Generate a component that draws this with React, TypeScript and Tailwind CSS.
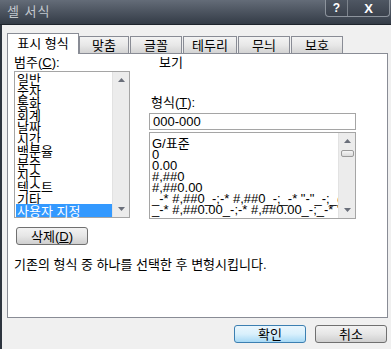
import React from 'react';

const font = { fontFamily: '"Liberation Sans", "Noto Sans CJK KR", sans-serif' };

const categories = [
  '일반',
  '숫자',
  '통화',
  '회계',
  '날짜',
  '시간',
  '백분율',
  '분수',
  '지수',
  '텍스트',
  '기타',
  '사용자 지정',
];

const formats = [
  'G/표준',
  '0',
  '0.00',
  '#,##0',
  '#,##0.00',
  '_-* #,##0_-;-* #,##0_-;_-* "-"_-;_@_-',
  '_-* #,##0.00_-;-* #,##0.00_-;_-* "-"??_-;_@_-',
];

const tabs = [
  { label: '맞춤', w: 'w-[50px]' },
  { label: '글꼴', w: 'w-[52px]' },
  { label: '테두리', w: 'w-[54px]' },
  { label: '무늬', w: 'w-[52px]' },
  { label: '보호', w: 'w-[52px]' },
];

const Arrow = ({ up }: { up?: boolean }) => (
  <svg width="7" height="4" viewBox="0 0 7 4">
    <path d={up ? 'M0 4 L3.5 0 L7 4 Z' : 'M0 0 L3.5 4 L7 0 Z'} fill="#6a6f7a" />
  </svg>
);

const ScrollBar = ({ thumb }: { thumb?: boolean }) => (
  <div className="w-[17px] h-full flex flex-col bg-[#ececec] border-l border-[#e2e2e2]">
    <div className="h-[16px] flex items-center justify-center">
      <Arrow up />
    </div>
    <div className="flex-1 flex flex-col items-center">
      {thumb && (
        <div className="mt-[1px] w-[13px] h-[7px] rounded-[2px] border border-[#9a9a9a] bg-gradient-to-b from-[#f6f6f6] to-[#dadada]" />
      )}
    </div>
    <div className="h-[16px] flex items-center justify-center">
      <Arrow />
    </div>
  </div>
);

const WinButton = ({
  children,
  primary,
  className = '',
}: {
  children: React.ReactNode;
  primary?: boolean;
  className?: string;
}) => (
  <div
    className={
      'h-[18px] rounded-[3px] border flex items-center justify-center text-[13px] leading-[13px] text-black ' +
      (primary
        ? 'border-[#3c7fb1] bg-gradient-to-b from-[#eaf6fd] via-[#d9f0fc] to-[#a7d9f5] '
        : 'border-[#707070] bg-gradient-to-b from-[#f2f2f2] via-[#e6e6e6] to-[#cfcfcf] ') +
      className
    }
  >
    {children}
  </div>
);

export default function App() {
  return (
    <div className="w-[391px] h-[349px] bg-[#f0f0f0] flex flex-col overflow-hidden text-black" style={font}>
      {/* title bar */}
      <div className="h-[25px] flex justify-between bg-gradient-to-b from-[#646c78] to-[#343c47] border-b border-[#1e242c]">
        <div className="pl-[7px] pt-[5px] text-[13px] leading-[14px] text-[#c3c8ce] tracking-[1px]">셀 서식</div>
        <div className="mr-[1px] h-[17px] flex border border-t-0 border-[#8d949d] rounded-b-[4px] bg-gradient-to-b from-[#4f5763] to-[#3b424d]">
          <div className="w-[22px] flex items-center justify-center text-white text-[12px] font-bold leading-none border-r border-[#7d848d]">
            ?
          </div>
          <div className="w-[41px] flex items-center justify-center text-white text-[13px] font-bold leading-none">
            X
          </div>
        </div>
      </div>

      <div className="flex-1 flex">
        <div className="w-[2px] bg-[#2e353f]" />
        <div className="flex-1 flex flex-col pl-[5px] pr-[3px] pt-[8px]">
          {/* tabs */}
          <div className="h-[20px] flex items-end">
            <div className="relative z-10 w-[72px] h-[21px] mb-[-1px] bg-white border border-b-0 border-[#898c95] flex justify-center pt-[3px] text-[13px] leading-[14px]">
              표시 형식
            </div>
            <div className="flex gap-[1px]">
              {tabs.map((t) => (
                <div
                  key={t.label}
                  className={
                    t.w +
                    ' h-[17px] border border-b-0 border-[#898c95] bg-gradient-to-b from-[#f3f3f3] via-[#e8e8e8] to-[#d3d3d3] flex justify-center pt-[2px] text-[13px] leading-[14px]'
                  }
                >
                  {t.label}
                </div>
              ))}
            </div>
          </div>

          {/* panel */}
          <div className="w-[381px] h-[265px] bg-white border border-[#898c95] flex flex-col pl-[6px]">
            <div className="flex pt-[2px]">
              {/* left column */}
              <div className="w-[116px] flex flex-col">
                <div className="text-[13px] leading-[13px]">
                  범주(<span className="underline">C</span>):
                </div>
                <div className="mt-[2px] h-[147px] border border-[#a5a5a5] flex">
                  <div className="flex-1 flex flex-col pl-[1px]">
                    {categories.map((c, i) => (
                      <div
                        key={c}
                        className={
                          'text-[13px] leading-[15px] pl-[1px] whitespace-nowrap ' +
                          (i === categories.length - 1 ? 'bg-[#3399ff] text-white h-[13px]' : 'h-[12px]')
                        }
                      >
                        {c}
                      </div>
                    ))}
                  </div>
                  <ScrollBar />
                </div>
              </div>

              {/* right column */}
              <div className="ml-[19px] w-[207px] flex flex-col">
                <div className="pl-[10px] text-[13px] leading-[13px]">보기</div>
                <div className="mt-[27px] pl-[2px] text-[13px] leading-[13px]">
                  형식(<span className="underline">T</span>):
                </div>
                <div className="mt-[4px] h-[17px] border border-[#a5a5a5] px-[3px] text-[13px] leading-[15px]">
                  000-000
                </div>
                <div className="mt-[2px] h-[87px] border border-[#a5a5a5] flex">
                  <div className="flex-1 overflow-hidden flex flex-col pl-[2px] pt-[4px]">
                    {formats.map((f) => (
                      <div key={f} className="h-[11px] text-[13px] leading-[13px] whitespace-nowrap">
                        {f}
                      </div>
                    ))}
                  </div>
                  <ScrollBar thumb />
                </div>
              </div>
            </div>

            <WinButton className="mt-[8px] ml-[2px] w-[72px]">
              삭제(<span className="underline">D</span>)
            </WinButton>

            <div className="mt-[13px] text-[13px] leading-[13px]">
              기존의 형식 중 하나를 선택한 후 변형시킵니다.
            </div>
          </div>

          {/* bottom buttons */}
          <div className="mt-[7px] flex justify-end gap-[9px] pr-[1px]">
            <WinButton primary className="w-[72px]">
              확인
            </WinButton>
            <WinButton className="w-[72px]">취소</WinButton>
          </div>
        </div>
      </div>
    </div>
  );
}
